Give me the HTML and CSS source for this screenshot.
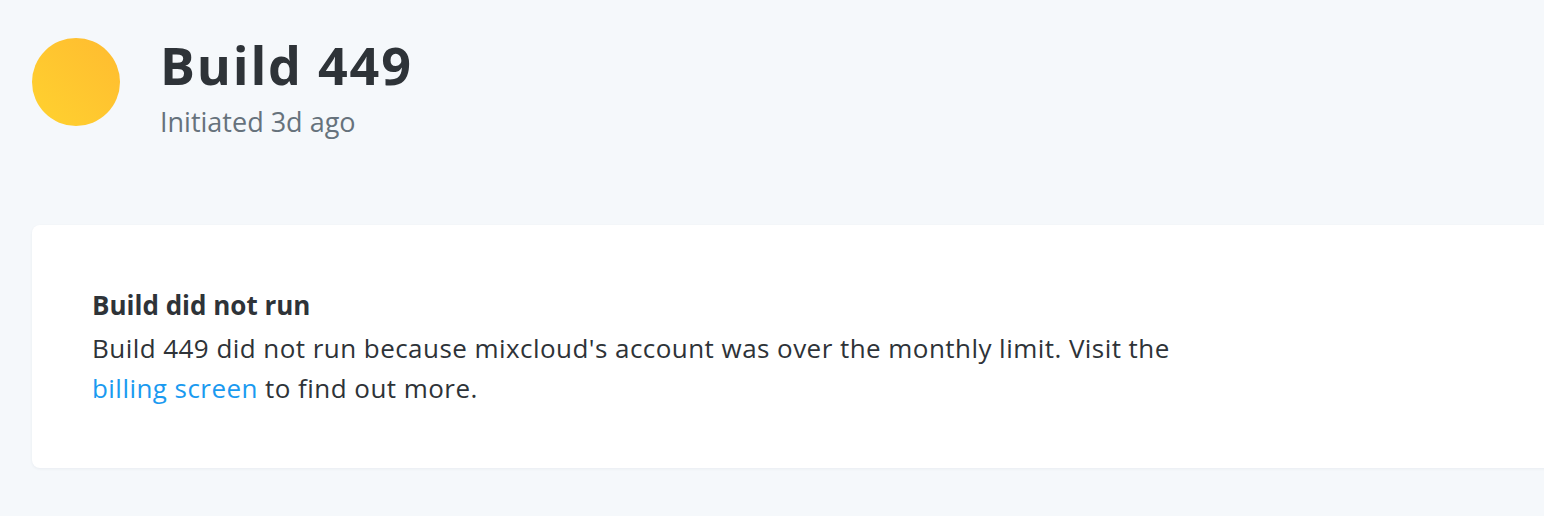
FILE: index.html
```html
<!DOCTYPE html>
<html>
<head>
<meta charset="utf-8">
<link rel="stylesheet" href="styles.css">
</head>
<body>
<div class="page">
  <header class="build-header">
    <div class="status-dot"></div>
    <div class="build-titles">
      <h1 class="build-title">Build 449</h1>
      <div class="build-sub">Initiated 3d ago</div>
    </div>
  </header>
  <section class="card">
    <h2 class="card-title">Build did not run</h2>
    <p class="card-text">Build 449 did not run because mixcloud's account was over the monthly limit. Visit the<br><a class="link" href="#">billing screen</a> to find out more.</p>
  </section>
</div>
</body>
</html>
```
FILE: styles.css
```css
html, body {
  margin: 0;
  padding: 0;
  background: #f5f8fb;
  overflow: hidden;
}
body {
  font-family: "Open Sans", "Lato", sans-serif;
  color: #2e3338;
  width: 1544px;
  height: 516px;
}
.page {
  padding: 35px 0 0 32px;
}
.build-header {
  display: flex;
  align-items: flex-start;
  gap: 40px;
}
.status-dot {
  margin-top: 3px;
  width: 88px;
  height: 88px;
  border-radius: 50%;
  background: linear-gradient(45deg, #ffd22f 0%, #ffbb30 100%);
  flex: none;
}
.build-titles {
  display: flex;
  flex-direction: column;
}
.build-title {
  margin: 0;
  font-size: 52px;
  line-height: 60px;
  font-weight: 700;
  letter-spacing: 1.8px;
  color: #2e3338;
}
.build-sub {
  margin-top: 9px;
  font-size: 27px;
  line-height: 36px;
  color: #66727c;
}
.card {
  margin-top: 85px;
  margin-right: -40px;
  background: #ffffff;
  border-radius: 8px;
  box-shadow: 0 1px 3px rgba(30, 50, 80, 0.06);
  padding: 62px 60px 60px 60px;
}
.card-title {
  margin: 0;
  font-size: 26px;
  line-height: 36px;
  font-weight: 700;
  color: #2e3338;
}
.card-text {
  margin: 5px 0 0 0;
  font-size: 26px;
  line-height: 40px;
  letter-spacing: 0.45px;
  color: #2e3338;
}
.link {
  color: #1a9af0;
  text-decoration: none;
}
```
